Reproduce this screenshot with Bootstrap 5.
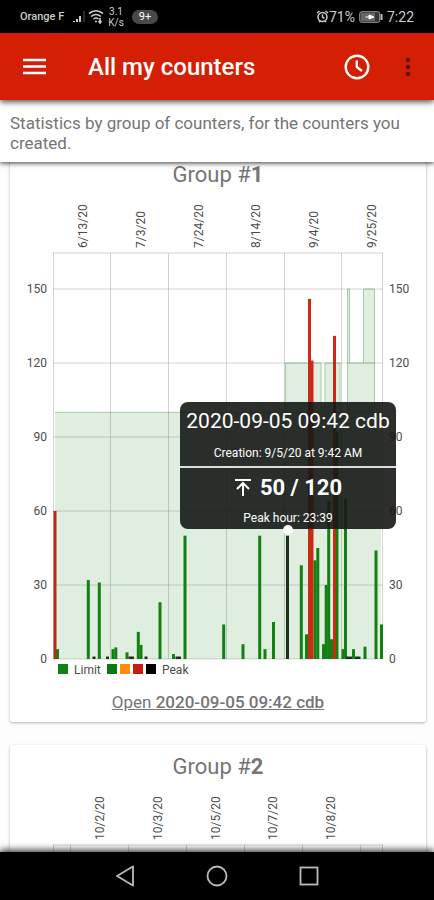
<!DOCTYPE html>
<html lang="en">
<head>
<meta charset="utf-8">
<meta name="viewport" content="width=device-width, initial-scale=1">
<title>All my counters</title>
<link href="https://cdn.jsdelivr.net/npm/bootstrap@5.3.0/dist/css/bootstrap.min.css" rel="stylesheet">
<style>
body { font-family: Roboto, "Liberation Sans", sans-serif; color: #757575; background: #fdfdfd; }
svg { display: block; flex: none; }
.status-bar { background: #000; color: #ccc; font-size: 11px; line-height: 12px; height: 33px; padding: 0 20px; }
.status-bar .time { font-size: 14px; }
.rate { font-size: 10px; line-height: 11px; }
.pill { background: #484848; color: #fff; font-size: 11px; line-height: 14px; padding: 0 7px; }
.app-bar { background: #d41f04; height: 67px; padding: 0 15px 0 20px; z-index: 3; box-shadow: 0 2px 6px rgba(0,0,0,.7); }
.app-bar h1 { font-size: 24px; line-height: 28px; font-weight: 500; margin-left: 40px; }
.app-bar button { line-height: 0; }
.intro { font-size: 17px; line-height: 20px; padding: 13px 10px 9px; z-index: 2; box-shadow: 0 1px 5px rgba(0,0,0,.8); }
.groups { padding: 0 8px 0 10px; flex: 1 1 0; min-height: 0; gap: 23px; }
.group-card { border-radius: 3px; background: #fff; box-shadow: 0 1px 3px rgba(0,0,0,.3); padding: 8px 0 7px; flex: none; }
.group-card:first-child { margin-top: -9px; }
.group-card h2 { font-size: 22px; line-height: 28px; }
.chart { width: 100%; height: auto; }
.chart text { font-size: 12px; fill: #4c4c4c; }
.open-link { color: #757575; font-size: 17px; line-height: 20px; margin-top: 13px; }
.open-link b { font-weight: 500; }
.tip { left: 170px; top: 213px; width: 216px; border-radius: 8px; background: rgba(22,24,22,.9); color: #fff; font-size: 12px; line-height: 16px; }
.tip-title { font-size: 21px; line-height: 26px; padding: 6px 0 11px; }
.tip-head { border-bottom: 2px solid #ddd; padding-bottom: 5px; }
.tip-peak { font-size: 22px; line-height: 28px; font-weight: 700; padding: 6px 0 8px; }
.tip-foot { padding-bottom: 3px; }
.tip-dot { width: 10px; height: 10px; left: 103px; bottom: -6px; background: #fff; }
.nav-keys { background: #000; height: 48px; gap: 70px; z-index: 3; box-shadow: 0 -2px 7px rgba(0,0,0,.8); }
</style>
<script src="https://cdn.jsdelivr.net/npm/bootstrap@5.3.0/dist/js/bootstrap.bundle.min.js"></script>
</head>
<body class="d-flex flex-column vh-100 overflow-hidden">
<div class="status-bar d-flex flex-shrink-0 align-items-center justify-content-between">
  <div class="d-flex align-items-center">
    <span class="fw-medium">Orange F</span>
    <svg class="ms-2" width="16" height="14" viewBox="0 0 16 14"><path d="M2 12v-1M5 12V9M8 12V6" stroke="#ccc" stroke-width="2"/><path d="M12 12V1" stroke="#555" stroke-width="1"/></svg>
    <svg width="16" height="15" viewBox="0 0 16 15" fill="none" stroke="#ccc" stroke-width="1.600"><path d="M1 4.500Q8-1 15 4.500M3 7.500Q8 3.500 13 7.500M5.500 10Q8 8 10.500 10"/><path d="M7 12.500h2M12 9v5M10.500 12l1.500 2 1.500-2"/></svg>
    <span class="rate text-center ms-1">3.1<br>K/s</span>
    <span class="pill rounded-pill ms-2">9+</span>
  </div>
  <div class="d-flex align-items-center time">
    <svg width="13" height="13" viewBox="0 0 13 13" fill="none" stroke="#ccc" stroke-width="1.500"><circle cx="6.500" cy="7" r="4.500"/><path d="M6.500 4.500V7l2 1.500M1 3l2.500-2M12 3L9.500 1M3 12l1-1M10 12l-1-1"/></svg>
    <span>71%</span>
    <svg class="mx-1" width="24" height="12" viewBox="0 0 24 12"><rect x=".7" y=".7" width="20" height="10.600" rx="2" fill="#333" stroke="#999"/><rect x="2" y="2" width="14" height="8" fill="#666"/><path d="M22.500 3v6" stroke="#bbb" stroke-width="2"/><path d="M6.500 6H10V4l5 2-5 2V6" stroke="#fff" fill="#fff"/></svg>
    <span>7:22</span>
  </div>
</div>
<header class="app-bar d-flex flex-shrink-0 align-items-center position-relative text-white">
  <button class="btn p-0 border-0" aria-label="Menu"><svg width="28" height="28" viewBox="0 0 28 28"><path d="M3 7h23M3 13.500h23M3 20h23" stroke="#fff" stroke-width="2.600"/></svg></button>
  <h1 class="mb-0 flex-grow-1">All my counters</h1>
  <button class="btn p-0 border-0" aria-label="History"><svg width="28" height="28" viewBox="0 0 28 28" fill="none" stroke="#fff" stroke-width="2.400"><circle cx="14" cy="14" r="11.300"/><path d="M13.800 7.500V14l5.200 4"/></svg></button>
  <button class="btn p-0 border-0 ms-4" aria-label="More"><svg width="24" height="28" viewBox="0 0 24 28" fill="#5a1408"><circle cx="13" cy="7" r="2.200"/><circle cx="13" cy="14" r="2.200"/><circle cx="13" cy="21" r="2.200"/></svg></button>
</header>
<p class="intro bg-white flex-shrink-0 position-relative mb-0">Statistics by group of counters, for the counters you created.</p>
<main class="groups d-flex flex-column overflow-hidden">
  <section class="group-card text-center">
    <h2 class="fw-normal mb-0">Group #<span class="fw-bold">1</span></h2>
    <div class="position-relative">
      <svg class="chart" id="chart1" viewBox="0 0 416 490" role="img" aria-label="Group 1 peaks and limits"></svg>
      <div class="tip position-absolute">
        <div class="tip-head"><div class="tip-title text-nowrap">2020-09-05 09:42 cdb</div>Creation: 9/5/20 at 9:42 AM</div>
        <div class="tip-peak d-flex justify-content-center align-items-center gap-2">
          <svg width="18" height="20" viewBox="0 0 18 20" fill="none" stroke="#fff" stroke-width="2"><path d="M1 2h16M9 18V6M3 11l6-6 6 6"/></svg>
          <span>50 / 120</span>
        </div>
        <div class="tip-foot">Peak hour: 23:39</div>
        <span class="tip-dot position-absolute rounded-circle"></span>
      </div>
    </div>
    <a href="#" class="open-link d-inline-block">Open <b>2020-09-05 09:42 cdb</b></a>
  </section>
  <section class="group-card text-center">
    <h2 class="fw-normal mb-0">Group #<span class="fw-bold">2</span></h2>
    <svg class="chart" id="chart2" viewBox="0 0 416 90" role="img" aria-label="Group 2 dates"></svg>
  </section>
</main>
<nav class="nav-keys d-flex flex-shrink-0 align-items-center justify-content-center position-relative">
  <button class="btn p-0 border-0" aria-label="Back"><svg width="22" height="22" viewBox="0 0 22 22" fill="none" stroke="#bbb" stroke-width="1.800"><path d="M19 1.500v19L3 11z" stroke-linejoin="round"/></svg></button>
  <button class="btn p-0 border-0" aria-label="Home"><svg width="22" height="22" viewBox="0 0 22 22" fill="none" stroke="#bbb" stroke-width="1.800"><circle cx="11" cy="11" r="9.500"/></svg></button>
  <button class="btn p-0 border-0" aria-label="Recent apps"><svg width="22" height="22" viewBox="0 0 22 22" fill="none" stroke="#bbb" stroke-width="1.800"><rect x="2.500" y="2.500" width="17" height="17"/></svg></button>
</nav>
<script>
const GREEN = '#128012', RED = '#cc2a12', BLACK = '#1c301c';
const ZERO = 470, TOP = 64, LEFT = 43, RIGHT = 373;
const yOf = v => ZERO - v * 370 / 150;

function drawChart(id, data) {
  let s = '';
  // limit areas: [from, to, limit, base]
  for (const [a, b, v, base] of data.limits || [])
    s += `<rect x="${a}" y="${yOf(v)}" width="${b - a}" height="${yOf(base) - yOf(v)}" fill="#e0eee0"/>`;
  for (const [a, b, v, base] of data.limits || [])
    if (base) s += `<path d="M${a} ${yOf(base)}V${yOf(v)}H${b}V${yOf(base)}" fill="none" stroke="#a5d0a5"/>`;
    else s += `<path d="M${a} ${yOf(v)}H${b}" stroke="#a5d0a5"/>`;
  for (const x of data.grid) s += `<path d="M${x} ${TOP}V${ZERO}" stroke="#000" stroke-opacity=".17"/>`;
  s += `<path d="M${LEFT} ${TOP}H${RIGHT}" stroke="#000" stroke-opacity=".17"/>`;
  for (const v of data.levels || []) {
    const y = yOf(v);
    s += `<path d="M${LEFT} ${y}H${RIGHT}" stroke="#000" stroke-opacity=".17"/>`;
    s += `<text x="37" y="${y + 4}" text-anchor="end">${v}</text><text x="379" y="${y + 4}">${v}</text>`;
  }
  for (const [x, v, c] of data.bars || [])
    s += `<rect x="${x - 1.5}" y="${yOf(v)}" width="3" height="${ZERO - yOf(v)}" fill="${c || GREEN}"/>`;
  for (const [x, t] of data.dates) s += `<text transform="translate(${x + 5} 59) rotate(-90)">${t}</text>`;
  if (data.bars) {
    const keys = [[48, '#128012'], [97, '#0a7a0a'], [110, '#ff8c0a'], [123, '#cc1a10'], [136, '#000']];
    for (const [x, c] of keys) s += `<rect x="${x}" y="475" width="10" height="10" fill="${c}"/>`;
    s += '<text x="64" y="485">Limit</text><text x="152" y="485">Peak</text>';
  }
  document.getElementById(id).innerHTML = s;
}

drawChart('chart1', {
  levels: [0, 30, 60, 90, 120, 150],
  grid: [43.5, 100.5, 158.5, 216.5, 274.5, 331.5, 372.5],
  dates: [[72, '6/13/20'], [130, '7/3/20'], [188, '7/24/20'], [245, '8/14/20'], [303, '9/4/20'], [361, '9/25/20']],
  limits: [[45, 371, 100, 0], [275.5, 311, 120, 100], [315, 330, 120, 100], [337.5, 364.5, 120, 100], [337.5, 339.5, 150, 120], [353.5, 364.5, 150, 120]],
  bars: [[47.5, 4], [45, 60, '#b92a18'], [78.3, 32], [84, 1, BLACK], [89.3, 31], [97.5, 1, BLACK], [103, 4], [105.8, 4.7], [117, 2.7], [120, 1, BLACK], [122.5, 1, BLACK],
    [128.3, 11], [131, 5.7], [136, 1, BLACK], [150, 23], [163.5, 2], [167, 1, BLACK], [169.5, 1, BLACK], [175, 50],
    [213.7, 14], [233, 6], [249.7, 50], [255, 4], [263.5, 15], [277.5, 50, BLACK], [291.3, 38], [296.5, 10],
    [305, 40], [307.8, 45], [299.5, 146, RED], [302, 121, RED], [313.5, 6], [318.7, 64], [316.2, 30], [321.5, 8], [327, 92], [324.5, 131, RED],
    [335.5, 65], [333, 4], [337.5, 1, BLACK], [340.5, 1, BLACK], [346.5, 1, BLACK], [349, 1, BLACK], [343.5, 4], [355, 5], [366, 44], [371.5, 14]]
});
drawChart('chart2', {
  grid: [43.5, 60.5, 118.5, 176.5, 234.5, 292.5, 350.5, 372.5],
  dates: [[89, '10/2/20'], [147, '10/3/20'], [205, '10/5/20'], [262, '10/7/20'], [320, '10/8/20']]
});
</script>
</body>
</html>
